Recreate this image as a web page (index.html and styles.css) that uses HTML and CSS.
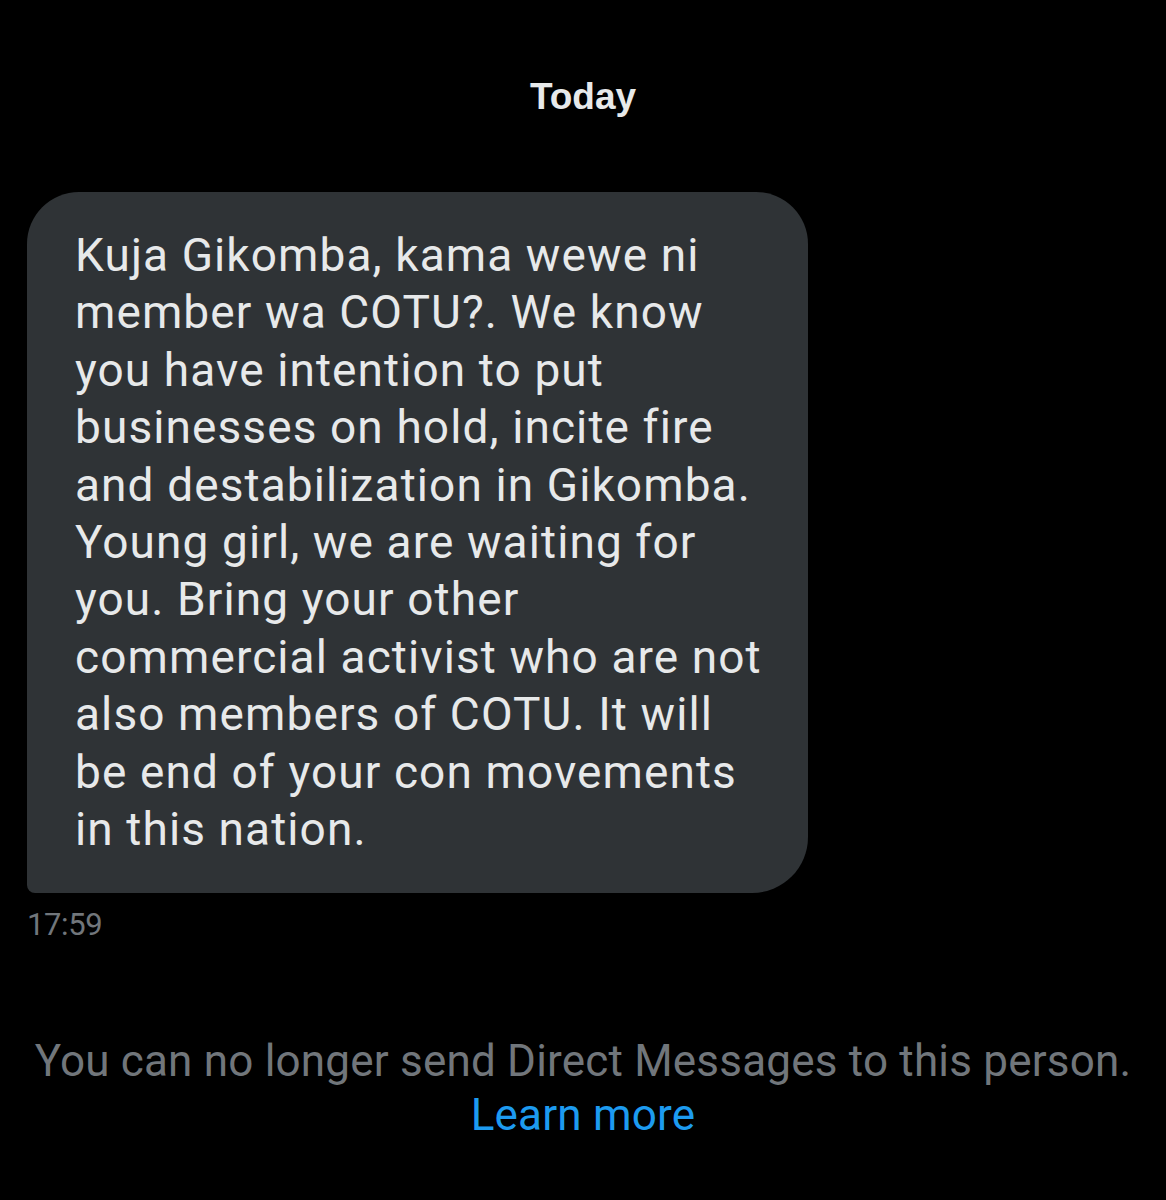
FILE: index.html
```html
<!DOCTYPE html>
<html>
<head>
<meta charset="utf-8">
<link rel="stylesheet" href="styles.css">
</head>
<body>
<div class="page">
  <div class="day">Today</div>
  <div class="msg">
    <div class="bubble">
      <p class="text">Kuja Gikomba, kama wewe ni<br>member wa COTU?. We know<br>you have intention to put<br>businesses on hold, incite fire<br>and destabilization in Gikomba.<br>Young girl, we are waiting for<br>you. Bring your other<br>commercial activist who are not<br>also members of COTU. It will<br>be end of your con movements<br>in this nation.</p>
    </div>
    <div class="time">17:59</div>
  </div>
  <div class="notice">
    <div class="notice-text">You can no longer send Direct Messages to this person.</div>
    <a class="learn" href="#">Learn more</a>
  </div>
</div>
</body>
</html>
```

FILE: styles.css
```css
html, body {
  margin: 0;
  padding: 0;
  background: #000;
}
.page {
  width: 1166px;
  height: 1200px;
  background: #000;
  font-family: Roboto, "Noto Sans", sans-serif;
  display: flex;
  flex-direction: column;
}
.day {
  text-align: center;
  color: #e7e9ea;
  font-family: "Liberation Sans", Arial, sans-serif;
  font-weight: 700;
  font-size: 37px;
  line-height: 40px;
  padding-top: 77px;
}
.msg {
  margin-top: 75px;
  padding-left: 27px;
  display: flex;
  flex-direction: column;
  align-items: flex-start;
}
.bubble {
  width: 781px;
  height: 701px;
  box-sizing: border-box;
  background: #2f3336;
  border-radius: 52px 52px 56px 8px;
  padding: 35px 0 0 48px;
}
.text {
  margin: 0;
  color: #e7e9ea;
  font-size: 46px;
  line-height: 57.4px;
  letter-spacing: 1.1px;
}
.time {
  margin-top: 14px;
  color: #71767b;
  font-size: 31px;
  line-height: 36px;
  letter-spacing: -0.4px;
}
.notice {
  margin-top: 91px;
  text-align: center;
  display: flex;
  flex-direction: column;
  align-items: center;
}
.notice-text {
  color: #71767b;
  font-size: 44px;
  line-height: 54px;
  letter-spacing: 0.2px;
}
.learn {
  color: #1d9bf0;
  font-size: 44px;
  line-height: 54px;
  letter-spacing: 0.2px;
  text-decoration: none;
}
```
